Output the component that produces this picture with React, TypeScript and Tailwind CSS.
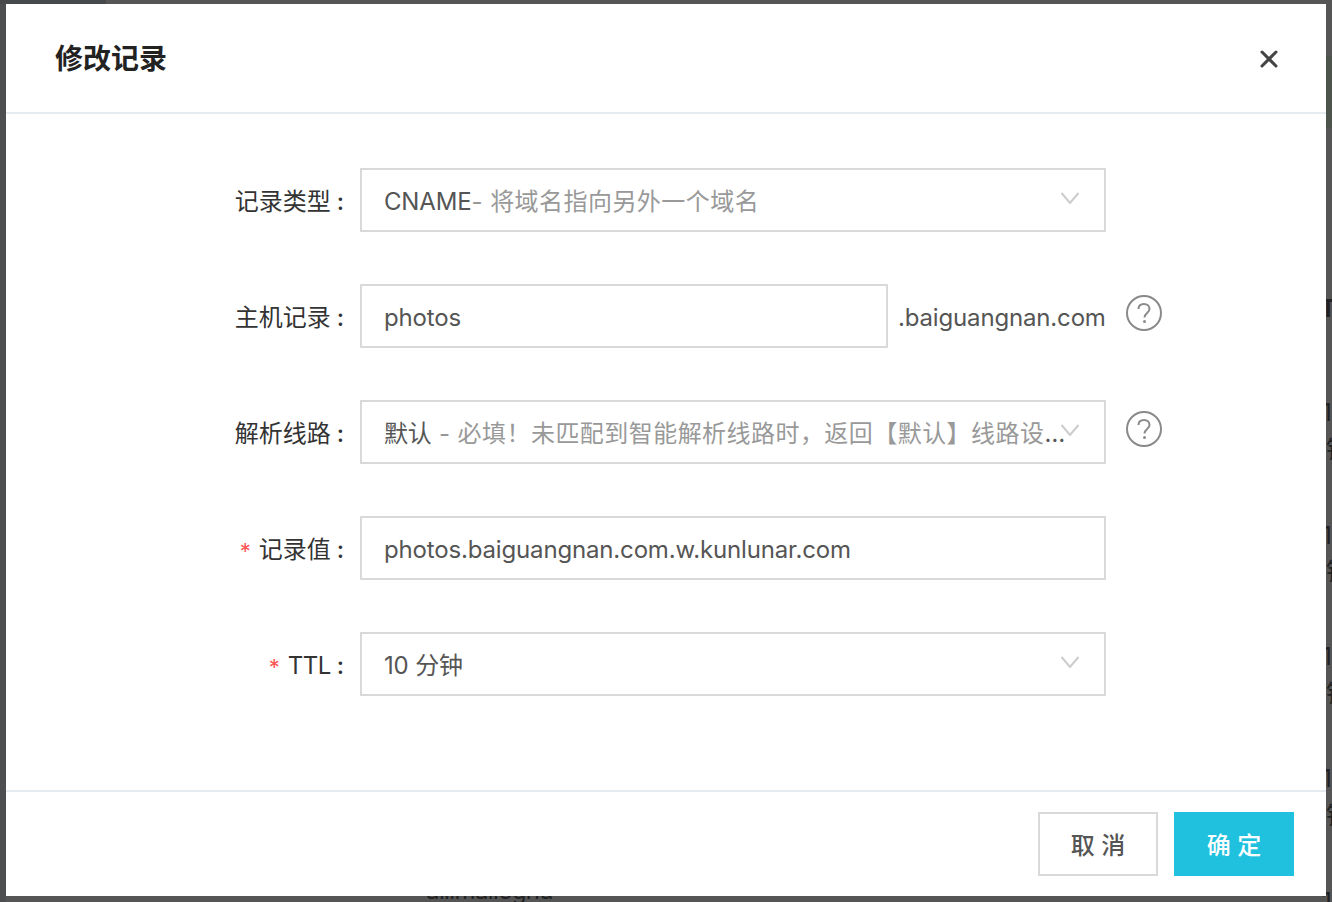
import { X } from "lucide-react";

const fontStack = 'Inter, "Noto Sans CJK SC", sans-serif';

// what peeks out from the page behind the dialog, cut off by its right edge
const peekOnes = [398, 521, 642, 764, 887];
const peekRadicals = [435, 557, 679, 801];

function Label({ text, required }: { text: string; required?: boolean }) {
  return (
    <label className="w-[338px] shrink-0 flex items-center justify-end text-[24px] text-[#333] pt-[4px]">
      {required && <span className="text-[#f55] mr-[8px] mt-[2px] text-[22px] leading-none">*</span>}
      <span className={text === "TTL" ? "tracking-[-0.5px]" : ""}>{text}</span>
      <span className="ml-[6px] font-medium">:</span>
    </label>
  );
}

function Caret() {
  return (
    <svg width="20" height="14" viewBox="0 0 20 14" fill="none" className="shrink-0 mt-[-4px] ml-[-6px]">
      <path d="M1.5 2 L10 12 L18.5 2" stroke="#ccc" strokeWidth="2" />
    </svg>
  );
}

function Help() {
  return (
    <svg width="38" height="38" viewBox="0 0 38 38" fill="none" className="shrink-0 mt-[-6px]">
      <circle cx="19" cy="19" r="17" stroke="#8a8a8a" strokeWidth="2" />
      <path d="M13.5 15 C13.5 11.5 16 10 19 10 C22 10 24.5 12 24.5 15 C24.5 19 19.5 19 19.5 23.5" stroke="#8a8a8a" strokeWidth="2" />
      <circle cx="19.5" cy="27.5" r="1.5" fill="#8a8a8a" />
    </svg>
  );
}

function SelectBox({ value, hint }: { value: string; hint?: string }) {
  return (
    <div className="w-[746px] h-[64px] border-2 border-[#d9d9d9] flex items-center pl-[22px] pr-[24px] text-[24px]">
      <span className="flex-1 truncate text-[#555] pt-[4px] tracking-[-0.16px]">
        {value}
        {hint && <span className="text-[#999] tracking-[0.45px]">{hint}</span>}
      </span>
      <Caret />
    </div>
  );
}

function TextBox({ value, width }: { value: string; width: string }) {
  return (
    <div className={`${width} h-[64px] border-2 border-[#d9d9d9] flex items-center pl-[22px] text-[24px] text-[#555]`}>
      <span className="pt-[4px] tracking-[-0.16px]">{value}</span>
    </div>
  );
}

function Row({ children }: { children: React.ReactNode }) {
  return <div className="flex items-center gap-[16px] h-[64px]">{children}</div>;
}

export default function App() {
  return (
    <div className="relative w-[1332px] h-[902px] overflow-hidden bg-[#555] pt-[4px] pl-[6px]" style={{ fontFamily: fontStack }}>
      <div className="absolute left-0 top-0 w-[6px] h-[902px] bg-[#4d4e50]" />
      <div className="absolute left-0 top-0 w-[106px] h-[4px] bg-[#48494b]" />
      <div className="absolute left-[1326px] top-[56px] w-[6px] h-[72px] bg-[#4c544c]" />
      <div className="absolute left-[426px] top-[876px] text-[24px] text-[#222] leading-[30px] tracking-[-0.6px]">aliimailegnu</div>
      <div className="absolute left-[1320px] top-[294px] text-[24px] font-bold text-[#222] leading-[30px]">T</div>
      {peekOnes.map((y) => (
        <div key={y} className="absolute left-[1322px] text-[24px] text-[#222] leading-[30px]" style={{ top: y }}>1</div>
      ))}
      {peekRadicals.map((y) => (
        <div key={y} className="absolute left-[1326px] text-[24px] text-[#222] leading-[30px]" style={{ top: y }}>钟</div>
      ))}
      <div className="relative w-[1320px] h-[892px] bg-white flex flex-col">
        <div className="h-[110px] flex items-center justify-between pl-[49px] pr-[43px] border-b-2 border-[#e6ebef] shrink-0">
          <h2 className="text-[28px] font-semibold text-[#222] pt-[2px]">修改记录</h2>
          <X size={28} strokeWidth={2.6} className="text-[#444] mt-[2px]" />
        </div>
        <div className="flex-1 flex flex-col gap-[52px] pt-[54px]">
          <Row>
            <Label text="记录类型" />
            <SelectBox value="CNAME" hint="- 将域名指向另外一个域名" />
          </Row>
          <Row>
            <Label text="主机记录" />
            <TextBox value="photos" width="w-[528px]" />
            <span className="ml-[-6px] text-[24px] text-[#555] w-[208px] pt-[4px] whitespace-nowrap tracking-[-0.16px]">.baiguangnan.com</span>
            <span className="ml-[3px]"><Help /></span>
          </Row>
          <Row>
            <Label text="解析线路" />
            <SelectBox value="默认" hint=" - 必填！未匹配到智能解析线路时，返回【默认】线路设置结果" />
            <span className="ml-[3px]"><Help /></span>
          </Row>
          <Row>
            <Label text="记录值" required />
            <TextBox value="photos.baiguangnan.com.w.kunlunar.com" width="w-[746px]" />
          </Row>
          <Row>
            <Label text="TTL" required />
            <SelectBox value="10 分钟" />
          </Row>
        </div>
        <div className="h-[106px] border-t-2 border-[#e6ebef] flex items-start justify-end gap-[16px] pt-[20px] pr-[32px] shrink-0">
          <button className="w-[120px] h-[64px] pt-[4px] border-2 border-[#d9d9d9] text-[24px] text-[#555] font-medium">取 消</button>
          <button className="w-[120px] h-[64px] pt-[4px] bg-[#20c1de] text-[24px] text-white font-medium">确 定</button>
        </div>
      </div>
    </div>
  );
}
